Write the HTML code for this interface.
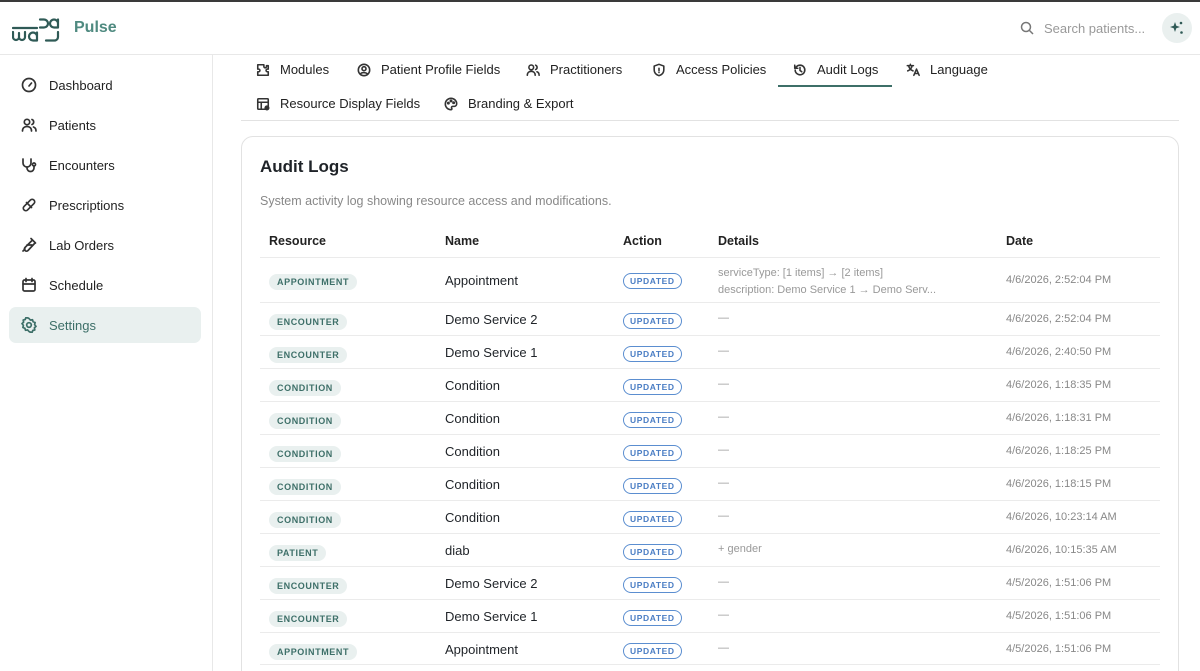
<!DOCTYPE html>
<html><head><meta charset="utf-8"><style>
*{box-sizing:border-box;margin:0;padding:0}
html,body{width:1200px;height:671px;overflow:hidden}
body{font-family:"Liberation Sans",sans-serif;background:#fff;color:#1f2328;position:relative}
.top{position:absolute;left:0;top:0;width:1200px;height:2px;background:#3a3a3a}
.hdr{position:absolute;left:0;top:2px;width:1200px;height:53px;border-bottom:1px solid #e8e8e8}
.side{position:absolute;left:0;top:55px;width:213px;height:616px;border-right:1px solid #e8e8e8}
.nav{position:absolute;left:9px;width:192px;height:36px;display:flex;align-items:center;padding-left:12px;font-size:13px;color:#222}
.nav svg{width:16px;height:16px;margin-right:12px;fill:none;stroke:#333;stroke-width:1.7;stroke-linecap:round;stroke-linejoin:round}
.nav.act{background:#e9f0ef;border-radius:7px;color:#3d6f68}
.nav.act svg{stroke:#3d6f68}
.tab{position:absolute;font-size:13px;color:#222;display:flex;align-items:center}
.tab svg{width:14px;height:14px;margin-right:10px;fill:none;stroke:#333;stroke-width:1.8;stroke-linecap:round;stroke-linejoin:round}
.card{position:absolute;left:241px;top:136px;width:938px;height:560px;border:1px solid #e2e2e2;border-radius:12px}
.th{position:absolute;top:234px;font-size:12.5px;font-weight:bold;color:#222}
.row{position:absolute;left:260px;width:900px;border-top:1px solid #ebebeb}
.row div{position:absolute}
.rb{left:9px;background:#e9f0ef;color:#3d6f68;font-size:9px;font-weight:bold;letter-spacing:.6px;padding:3px 8px;border-radius:9px}
.nm{left:185px;font-size:13px}
.up{left:363px;border:1.3px solid #5b8ed0;color:#4a7dc4;font-size:8.5px;font-weight:bold;letter-spacing:.6px;padding:2px 6px;border-radius:9px}
.dt{left:458px;font-size:11px;color:#999}
.da{left:746px;font-size:11px;color:#888}
</style></head><body>
<div class="top"></div>
<div class="hdr">
<svg style="position:absolute;left:12px;top:14px" width="50" height="28" viewBox="0 0 50 28" fill="none" stroke="#2f5a56" stroke-width="2.2" stroke-linecap="round" stroke-linejoin="round"><path d="M1 12h24"/><path d="M28 3.5h4a4 4 0 0 1 0 8h-4"/><path d="M46 7.5a4 4 0 1 0-4 4h4V3.5M46 7.5v4"/><path d="M1 16v5a3 3 0 0 0 6 0v-4v4a3 3 0 0 0 6 0v-5"/><path d="M25 20.5a4 4 0 1 0-4 4h4v-8"/><path d="M46 16v5a3.5 3.5 0 0 1-3.5 3.5H34"/></svg>
<div style="position:absolute;left:74px;top:17px;font-size:16px;font-weight:bold;color:#4f8a80">Pulse</div>
<svg style="position:absolute;left:1020px;top:19px" width="14" height="14" viewBox="0 0 14 14" fill="none" stroke="#777" stroke-width="1.5"><circle cx="6" cy="6" r="4.5"/><path d="M9.5 9.5l3.5 3.5"/></svg>
<div style="position:absolute;left:1044px;top:19px;font-size:13px;color:#999">Search patients...</div>
<div style="position:absolute;left:1162px;top:11px;width:30px;height:30px;border-radius:50%;background:#eaf0ef"></div>
<svg style="position:absolute;left:1169px;top:18px" width="16" height="16" viewBox="0 0 16 16" fill="#2f5a56"><path d="M6 2l1.3 3.7L11 7 7.3 8.3 6 12 4.7 8.3 1 7l3.7-1.3z"/><circle cx="12" cy="3" r="1.3"/><circle cx="12.5" cy="12.5" r="1.3"/></svg>
</div>
<div class="side">
<div class="nav" style="top:12px"><svg viewBox="0 0 16 16"><circle cx="8" cy="8" r="6.5"/><path d="M8 9l2.5-3"/></svg>Dashboard</div>
<div class="nav" style="top:52px"><svg viewBox="0 0 16 16"><circle cx="6" cy="5" r="2.7"/><path d="M1.5 14c0-3 2-4.5 4.5-4.5s4.5 1.5 4.5 4.5M11 2.5a2.7 2.7 0 0 1 0 5M12.5 10c1.5.5 2.5 2 2.5 4"/></svg>Patients</div>
<div class="nav" style="top:92px"><svg viewBox="0 0 16 16"><path d="M2 2v4a4 4 0 0 0 8 0V2M6 10v1a3.5 3.5 0 0 0 7 0V9"/><circle cx="13" cy="7.5" r="1.5"/></svg>Encounters</div>
<div class="nav" style="top:132px"><svg viewBox="0 0 16 16"><rect x="1" y="5.5" width="14" height="5" rx="2.5" transform="rotate(-45 8 8)"/><path d="M5.5 5.5l5 5"/></svg>Prescriptions</div>
<div class="nav" style="top:172px"><svg viewBox="0 0 16 16"><path d="M10 1.5l4.5 4.5M11.5 3L4 10.5a2 2 0 0 0 3 3L14 6M6 8h5"/><path d="M2 14l2-2"/></svg>Lab Orders</div>
<div class="nav" style="top:212px"><svg viewBox="0 0 16 16"><rect x="2" y="3" width="12" height="11" rx="1.5"/><path d="M2 7h12M5 1.5v3M11 1.5v3"/></svg>Schedule</div>
<div class="nav act" style="top:252px"><svg viewBox="0 0 16 16"><circle cx="8" cy="8" r="2.3"/><path d="M8 1.5l1.4 1.6 2.1-.4.6 2 2 .8-.5 2.1L15 9.4l-1.6 1.4.4 2.1-2 .6-.8 2-2.1-.5L8 14.5l-1.4-1.6-2.1.4-.6-2-2-.8.5-2.1L1 6.6 2.6 5.2 2.2 3.1l2-.6.8-2 2.1.5z"/></svg>Settings</div>
</div>
<div class="tab" style="left:256px;top:62px"><svg viewBox="0 0 16 16"><path d="M6 2h3v2a1.5 1.5 0 0 0 3 0V3h2v4h-1a1.5 1.5 0 0 0 0 3h1v4H2V10h1a1.5 1.5 0 0 0 0-3H2V2z"/></svg>Modules</div>
<div class="tab" style="left:357px;top:62px"><svg viewBox="0 0 16 16"><circle cx="8" cy="8" r="6.5"/><circle cx="8" cy="6.5" r="2.3"/><path d="M4 12.5c1-2 6-2 8 0"/></svg>Patient Profile Fields</div>
<div class="tab" style="left:526px;top:62px"><svg viewBox="0 0 16 16"><circle cx="6" cy="5" r="2.7"/><path d="M1.5 14c0-3 2-4.5 4.5-4.5s4.5 1.5 4.5 4.5M11 2.5a2.7 2.7 0 0 1 0 5M12.5 10c1.5.5 2.5 2 2.5 4"/></svg>Practitioners</div>
<div class="tab" style="left:652px;top:62px"><svg viewBox="0 0 16 16"><path d="M8 1.5l5.5 2v4.5c0 3.5-2.5 5.5-5.5 6.5-3-1-5.5-3-5.5-6.5V3.5z"/><path d="M8 6v2.5M8 10.5v.3"/></svg>Access Policies</div>
<div class="tab" style="left:793px;top:62px"><svg viewBox="0 0 16 16"><path d="M2.5 8a5.5 5.5 0 1 0 1.6-3.9L2 6M2 2.5V6h3.5M8 5v3.5l2 1.5"/></svg>Audit Logs</div>
<div style="position:absolute;left:778px;top:85px;width:114px;height:2px;background:#3d6f68"></div>
<div class="tab" style="left:906px;top:62px"><svg viewBox="0 0 16 16"><path d="M1.5 3h7M5 1.5V3M3 3c.5 3 2.5 5 5 6M7 3c-.5 3-2.5 5-5 6M9 14l3-7 3 7M10 12h4"/></svg>Language</div>
<div class="tab" style="left:256px;top:96px"><svg viewBox="0 0 16 16"><rect x="2" y="2" width="12" height="12" rx="1"/><path d="M2 6h12M6 6v8"/><circle cx="12.5" cy="12.5" r="2" fill="#333"/></svg>Resource Display Fields</div>
<div class="tab" style="left:444px;top:96px"><svg viewBox="0 0 16 16"><path d="M8 1.5a6.5 6.5 0 0 0 0 13c1 0 1.3-1 .8-1.8-.6-.9 0-2 1-2H12a3 3 0 0 0 2.5-3c0-3.5-3-6.2-6.5-6.2z"/><circle cx="5" cy="7" r=".8"/><circle cx="8" cy="4.5" r=".8"/><circle cx="11" cy="6.5" r=".8"/></svg>Branding &amp; Export</div>
<div style="position:absolute;left:241px;top:120px;width:938px;height:1px;background:#e2e2e2"></div>
<div class="card"></div>
<div style="position:absolute;left:260px;top:157px;font-size:17px;font-weight:bold">Audit Logs</div>
<div style="position:absolute;left:260px;top:194px;font-size:12.5px;color:#888">System activity log showing resource access and modifications.</div>
<div class="th" style="left:269px">Resource</div><div class="th" style="left:445px">Name</div><div class="th" style="left:623px">Action</div><div class="th" style="left:718px">Details</div><div class="th" style="left:1006px">Date</div>
<div class="row" style="top:257px;height:45px"><div class="rb" style="top:16px">APPOINTMENT</div><div class="nm" style="top:15px">Appointment</div><div class="up" style="top:15px">UPDATED</div><div class="dt" style="top:7px;line-height:17px">serviceType: [1 items] → [2 items]<br>description: Demo Service 1 → Demo Serv...</div><div class="da" style="top:16px">4/6/2026, 2:52:04 PM</div></div>
<div class="row" style="top:302px;height:33px"><div class="rb" style="top:11px">ENCOUNTER</div><div class="nm" style="top:9px">Demo Service 2</div><div class="up" style="top:10px">UPDATED</div><div class="dt" style="top:9px">—</div><div class="da" style="top:10px">4/6/2026, 2:52:04 PM</div></div>
<div class="row" style="top:335px;height:33px"><div class="rb" style="top:11px">ENCOUNTER</div><div class="nm" style="top:9px">Demo Service 1</div><div class="up" style="top:10px">UPDATED</div><div class="dt" style="top:9px">—</div><div class="da" style="top:10px">4/6/2026, 2:40:50 PM</div></div>
<div class="row" style="top:368px;height:33px"><div class="rb" style="top:11px">CONDITION</div><div class="nm" style="top:9px">Condition</div><div class="up" style="top:10px">UPDATED</div><div class="dt" style="top:9px">—</div><div class="da" style="top:10px">4/6/2026, 1:18:35 PM</div></div>
<div class="row" style="top:401px;height:33px"><div class="rb" style="top:11px">CONDITION</div><div class="nm" style="top:9px">Condition</div><div class="up" style="top:10px">UPDATED</div><div class="dt" style="top:9px">—</div><div class="da" style="top:10px">4/6/2026, 1:18:31 PM</div></div>
<div class="row" style="top:434px;height:33px"><div class="rb" style="top:11px">CONDITION</div><div class="nm" style="top:9px">Condition</div><div class="up" style="top:10px">UPDATED</div><div class="dt" style="top:9px">—</div><div class="da" style="top:10px">4/6/2026, 1:18:25 PM</div></div>
<div class="row" style="top:467px;height:33px"><div class="rb" style="top:11px">CONDITION</div><div class="nm" style="top:9px">Condition</div><div class="up" style="top:10px">UPDATED</div><div class="dt" style="top:9px">—</div><div class="da" style="top:10px">4/6/2026, 1:18:15 PM</div></div>
<div class="row" style="top:500px;height:33px"><div class="rb" style="top:11px">CONDITION</div><div class="nm" style="top:9px">Condition</div><div class="up" style="top:10px">UPDATED</div><div class="dt" style="top:9px">—</div><div class="da" style="top:10px">4/6/2026, 10:23:14 AM</div></div>
<div class="row" style="top:533px;height:33px"><div class="rb" style="top:11px">PATIENT</div><div class="nm" style="top:9px">diab</div><div class="up" style="top:10px">UPDATED</div><div class="dt" style="top:9px">+ gender</div><div class="da" style="top:10px">4/6/2026, 10:15:35 AM</div></div>
<div class="row" style="top:566px;height:33px"><div class="rb" style="top:11px">ENCOUNTER</div><div class="nm" style="top:9px">Demo Service 2</div><div class="up" style="top:10px">UPDATED</div><div class="dt" style="top:9px">—</div><div class="da" style="top:10px">4/5/2026, 1:51:06 PM</div></div>
<div class="row" style="top:599px;height:33px"><div class="rb" style="top:11px">ENCOUNTER</div><div class="nm" style="top:9px">Demo Service 1</div><div class="up" style="top:10px">UPDATED</div><div class="dt" style="top:9px">—</div><div class="da" style="top:10px">4/5/2026, 1:51:06 PM</div></div>
<div class="row" style="top:632px;height:33px;border-bottom:1px solid #ebebeb"><div class="rb" style="top:11px">APPOINTMENT</div><div class="nm" style="top:9px">Appointment</div><div class="up" style="top:10px">UPDATED</div><div class="dt" style="top:9px">—</div><div class="da" style="top:10px">4/5/2026, 1:51:06 PM</div></div>
</body></html>
